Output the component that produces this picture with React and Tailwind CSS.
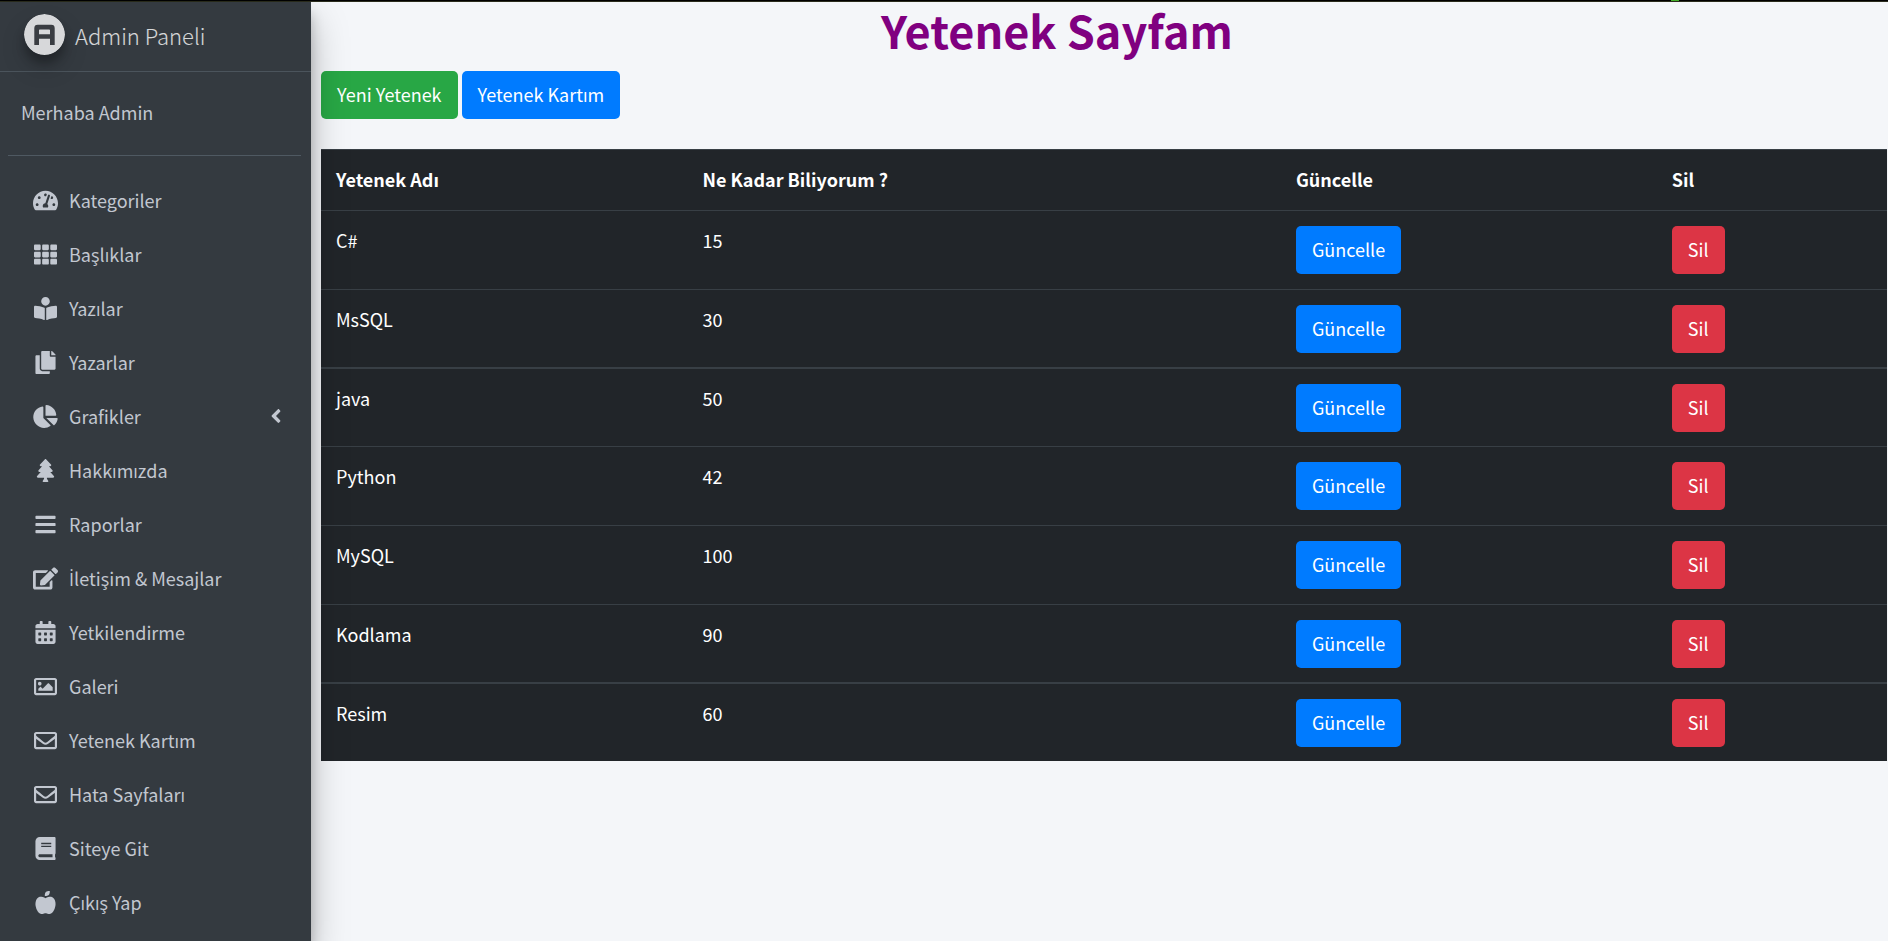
import {
  FaTachometerAlt, FaTh, FaBookReader, FaCopy, FaChartPie, FaTree, FaBars, FaEdit,
  FaCalendarAlt, FaRegImage, FaRegEnvelope, FaBook, FaAppleAlt, FaAngleLeft,
} from "react-icons/fa";

const NAV = [
  { label: "Kategoriler", Icon: FaTachometerAlt },
  { label: "Başlıklar", Icon: FaTh },
  { label: "Yazılar", Icon: FaBookReader },
  { label: "Yazarlar", Icon: FaCopy },
  { label: "Grafikler", Icon: FaChartPie, expandable: true },
  { label: "Hakkımızda", Icon: FaTree },
  { label: "Raporlar", Icon: FaBars },
  { label: "İletişim & Mesajlar", Icon: FaEdit },
  { label: "Yetkilendirme", Icon: FaCalendarAlt },
  { label: "Galeri", Icon: FaRegImage },
  { label: "Yetenek Kartım", Icon: FaRegEnvelope },
  { label: "Hata Sayfaları", Icon: FaRegEnvelope },
  { label: "Siteye Git", Icon: FaBook },
  { label: "Çıkış Yap", Icon: FaAppleAlt },
];

const SKILLS = [
  ["C#", 15],
  ["MsSQL", 30],
  ["java", 50],
  ["Python", 42],
  ["MySQL", 100],
  ["Kodlama", 90],
  ["Resim", 60],
];

function Logo() {
  return (
    <svg viewBox="0 0 41 41" className="h-[41px] w-[41px] rounded-full shadow-[0_12px_24px_rgba(0,0,0,0.19),0_8px_8px_rgba(0,0,0,0.23)]" aria-hidden="true">
      <circle cx="20.5" cy="20.5" r="20.5" fill="#d7d8da" />
      <path
        d="M10.300 31V14.200a3.400 3.400 0 0 1 3.400-3.400h13.600a3.400 3.400 0 0 1 3.400 3.400V31h-4.700v-6.200H15V31zM15 20.200h11v-4a.8.8 0 0 0-.8-.8h-9.400a.8.8 0 0 0-.8.8z"
        fill="#3a3d42"
        fillRule="evenodd"
      />
    </svg>
  );
}

// The CJK face has no dotted capital I, so that letter comes from Open Sans.
function Label({ text }) {
  return text.startsWith("İ") ? (
    <>
      <span className="font-['Open_Sans',sans-serif]">İ</span>
      {text.slice(1)}
    </>
  ) : text;
}

function Sidebar() {
  return (
    <aside className="relative z-10 w-[311px] shrink-0 bg-[#343a40] text-[#c2c7d0] shadow-[0_18px_35px_rgba(0,0,0,0.25),0_12px_12px_rgba(0,0,0,0.22)]">
      <a href="#" className="flex h-[70px] items-center gap-[10px] border-b border-[#4b545c] pb-1 pl-6 text-[22px] font-light text-white/80">
        <Logo />
        <span>Admin Paneli</span>
      </a>
      <div className="ml-2 mr-[10px] border-b border-[#4f5962] px-[13px] pb-[29px] pt-[26px]">
        <a href="#">Merhaba Admin</a>
      </div>
      <nav className="pt-[17px]">
        <ul>
          {NAV.map(({ label, Icon, expandable }) => (
            <li key={label}>
              <a href="#" className="flex h-[54px] items-center pl-[30px] pr-6">
                <span className="flex w-[30px] justify-center">
                  <Icon className="h-[23px] w-[25px]" />
                </span>
                <span className="flex-1 pl-[9px]"><Label text={label} /></span>
                {expandable && <FaAngleLeft className="h-[22px] w-[22px]" />}
              </a>
            </li>
          ))}
        </ul>
      </nav>
    </aside>
  );
}

const BTN = "inline-flex h-12 items-center rounded-[5px] px-4 pb-0.5 text-white";

export default function App() {
  return (
    <div className="flex min-h-screen flex-col bg-[#f4f6f9] font-['Noto_Sans_CJK_SC','Open_Sans',sans-serif] text-[18px] leading-7">
      <div className="flex h-[2px] justify-end border-b border-[#2b2d1d] bg-black pr-[209px]">
        <span className="w-2 bg-[#43b02a]" />
      </div>
      <div className="flex flex-1">
        <Sidebar />
        <main className="min-w-0 flex-1 pl-[10px] pr-px">
          <h1 className="pr-[94px] text-center text-[45px] font-bold leading-[56px] text-[#800080]">Yetenek Sayfam</h1>
          <div className="mt-[13px] flex gap-1">
            <button type="button" className={`${BTN} bg-[#28a745]`}>Yeni Yetenek</button>
            <button type="button" className={`${BTN} bg-[#007bff]`}>Yetenek Kartım</button>
          </div>
          <table className="mt-[30px] w-full table-fixed border-separate border-spacing-0 bg-[#212529] text-left text-white">
            <colgroup>
              <col className="w-[23.4%]" />
              <col className="w-[37.9%]" />
              <col className="w-[24%]" />
              <col />
            </colgroup>
            <thead>
              <tr>
                {["Yetenek Adı", "Ne Kadar Biliyorum ?", "Güncelle", "Sil"].map((head) => (
                  <th key={head} className="h-[61px] border-t border-[#383f45] px-[15px] pb-0.5 font-bold">{head}</th>
                ))}
              </tr>
            </thead>
            <tbody className="[&_td]:h-[79px] [&_td]:border-t [&_td]:border-[#383f45] [&_td]:px-[15px] [&_td]:pt-[15px] [&_td]:align-top [&>tr:nth-child(4n+2)>td]:h-[78px] [&>tr:nth-child(4n+3)>td]:border-t-2">
              {SKILLS.map(([name, level]) => (
                <tr key={name}>
                  <td>{name}</td>
                  <td>{level}</td>
                  <td><button type="button" className={`${BTN} bg-[#007bff]`}>Güncelle</button></td>
                  <td><button type="button" className={`${BTN} bg-[#dc3545]`}>Sil</button></td>
                </tr>
              ))}
            </tbody>
          </table>
        </main>
      </div>
    </div>
  );
}
